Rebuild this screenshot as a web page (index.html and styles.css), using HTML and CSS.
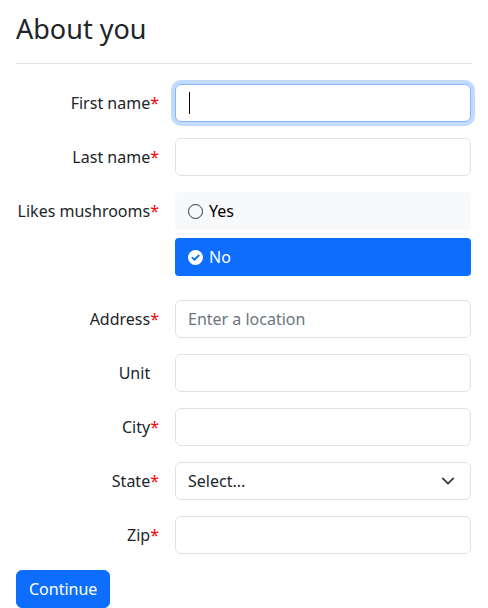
FILE: index.html
```html
<!DOCTYPE html>
<html lang="en">
<head>
<meta charset="utf-8">
<title>About you</title>
<link rel="stylesheet" href="styles.css">
</head>
<body>
<main class="page">
  <h2 class="title">About you</h2>
  <hr class="divider">
  <form class="form">
    <div class="row">
      <label class="label">First name<span class="req">*</span></label>
      <div class="field">
        <div class="control focused"><span class="caret"></span></div>
      </div>
    </div>
    <div class="row">
      <label class="label">Last name<span class="req">*</span></label>
      <div class="field"><div class="control"></div></div>
    </div>
    <div class="row row-radio">
      <label class="label">Likes mushrooms<span class="req">*</span></label>
      <div class="field options">
        <div class="option">
          <span class="radio"></span><span>Yes</span>
        </div>
        <div class="option selected">
          <svg class="check" width="15" height="15" viewBox="0 0 16 16"><circle cx="8" cy="8" r="8" fill="#fff"/><path d="M4.6 8.2 L6.9 10.4 L11.4 5.9" fill="none" stroke="#0d6efd" stroke-width="2" stroke-linecap="round" stroke-linejoin="round"/></svg>
          <span>No</span>
        </div>
      </div>
    </div>
    <div class="row">
      <label class="label">Address<span class="req">*</span></label>
      <div class="field"><div class="control"><span class="placeholder">Enter a location</span></div></div>
    </div>
    <div class="row">
      <label class="label">Unit<span class="req hidden">*</span></label>
      <div class="field"><div class="control"></div></div>
    </div>
    <div class="row">
      <label class="label">City<span class="req">*</span></label>
      <div class="field"><div class="control"></div></div>
    </div>
    <div class="row">
      <label class="label">State<span class="req">*</span></label>
      <div class="field">
        <div class="control select"><span>Select...</span>
          <svg width="14" height="14" viewBox="0 0 16 16"><path d="M2 5l6 6 6-6" fill="none" stroke="#343a40" stroke-width="2" stroke-linecap="round" stroke-linejoin="round"/></svg>
        </div>
      </div>
    </div>
    <div class="row">
      <label class="label">Zip<span class="req">*</span></label>
      <div class="field"><div class="control"></div></div>
    </div>
    <button type="button" class="btn">Continue</button>
  </form>
</main>
</body>
</html>
```

FILE: styles.css
```css
* { box-sizing: border-box; }
html, body { margin: 0; padding: 0; background: #fff; }
body {
  font-family: "Noto Sans", "Open Sans", sans-serif;
  font-size: 16px;
  line-height: 24px;
  color: #212529;
}
.page { padding: 0 16px; }
.title {
  margin: 12px 0 0;
  font-size: 27px;
  font-weight: 400;
  line-height: 34px;
  color: #212529;
}
.divider {
  margin: 17px 0 20px;
  border: 0;
  border-top: 1px solid #e3e5e8;
  height: 0;
}
.form { display: flex; flex-direction: column; }
.row {
  display: flex;
  gap: 16px;
  margin-bottom: 16px;
}
.row-radio { margin-bottom: 24px; }
.label {
  width: 143px;
  flex: none;
  text-align: right;
  padding-top: 7px;
  line-height: 24px;
}
.req { color: #f00; }
.req.hidden { visibility: hidden; }
.field { flex: 1; margin-right: 1px; }
.control {
  position: relative;
  height: 38px;
  border: 1px solid #dee2e6;
  border-radius: 6px;
  padding: 6px 12px;
  background: #fff;
}
.focused {
  border-color: #86b7fe;
  box-shadow: 0 0 0 4px rgba(13, 110, 253, 0.25);
}
.caret {
  position: absolute;
  left: 13px;
  top: 7px;
  width: 1px;
  height: 22px;
  background: #000;
}
.placeholder { color: #6c757d; }
.select {
  display: flex;
  align-items: center;
  justify-content: space-between;
  padding-right: 15px;
}
.options { display: flex; flex-direction: column; gap: 8px; }
.option {
  height: 38px;
  border-radius: 4px;
  background: #f8f9fa;
  display: flex;
  align-items: center;
  gap: 6px;
  padding: 0 13px;
  color: #000;
}
.option.selected { background: #0d6efd; color: #fff; }
.radio {
  width: 15px;
  height: 15px;
  border: 1.5px solid #333;
  border-radius: 50%;
  flex: none;
}
.check { flex: none; }
.btn {
  align-self: flex-start;
  margin: 0;
  height: 38px;
  padding: 6px 12px;
  border: 1px solid #0d6efd;
  border-radius: 6px;
  background: #0d6efd;
  color: #fff;
  font-family: inherit;
  font-size: 16px;
  line-height: 24px;
}
```
